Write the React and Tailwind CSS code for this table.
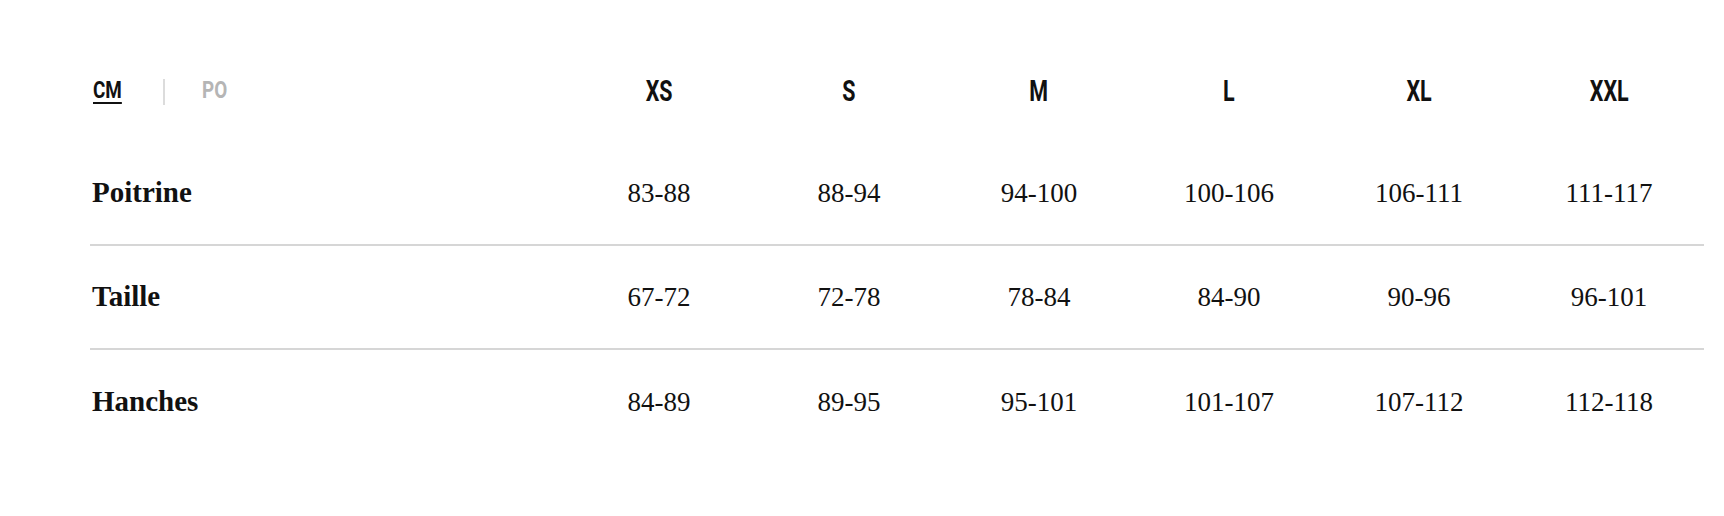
const sizes = ['XS', 'S', 'M', 'L', 'XL', 'XXL'];

const rows = [
  { label: 'Poitrine', values: ['83-88', '88-94', '94-100', '100-106', '106-111', '111-117'] },
  { label: 'Taille', values: ['67-72', '72-78', '78-84', '84-90', '90-96', '96-101'] },
  { label: 'Hanches', values: ['84-89', '89-95', '95-101', '101-107', '107-112', '112-118'] },
];

const condensed = "font-['Roboto',sans-serif] font-bold";

const SizeChart = () => {
  return (
    <div className="min-h-screen bg-white pt-[41px] pl-[90px] pr-5 text-[#111]">
      <div className="grid grid-cols-[474px_repeat(6,190px)] h-[101px] items-center">
        <div className={`flex items-center ${condensed} text-[23px] pl-[3px]`}>
          <div className="w-[70px]">
            <button className="inline-block origin-left scale-x-[0.82] underline decoration-2 underline-offset-[4px] text-[#111]">
              CM
            </button>
          </div>
          <span className="h-[26px] w-[2px] bg-[#dcdcdc]" />
          <div className="pl-[37px]">
            <button className="inline-block origin-left scale-x-[0.82] text-[#b5b5b5]">PO</button>
          </div>
        </div>
        {sizes.map((s) => (
          <div key={s} className={`text-center ${condensed} text-[29px]`}>
            <span className="inline-block scale-x-[0.74]">{s}</span>
          </div>
        ))}
      </div>

      {rows.map((row, i) => (
        <div
          key={row.label}
          className={`grid grid-cols-[474px_repeat(6,190px)] h-[104px] items-center ${
            i < rows.length - 1 ? 'border-b-2 border-[#d6d6d6]' : ''
          }`}
        >
          <div className="pl-[2px] font-['Liberation_Serif',serif] font-bold text-[29px]">
            {row.label}
          </div>
          {row.values.map((v) => (
            <div key={v} className="text-center font-['Liberation_Serif',serif] text-[27px]">
              {v}
            </div>
          ))}
        </div>
      ))}
    </div>
  );
};

export default function App() {
  return <SizeChart />;
}
